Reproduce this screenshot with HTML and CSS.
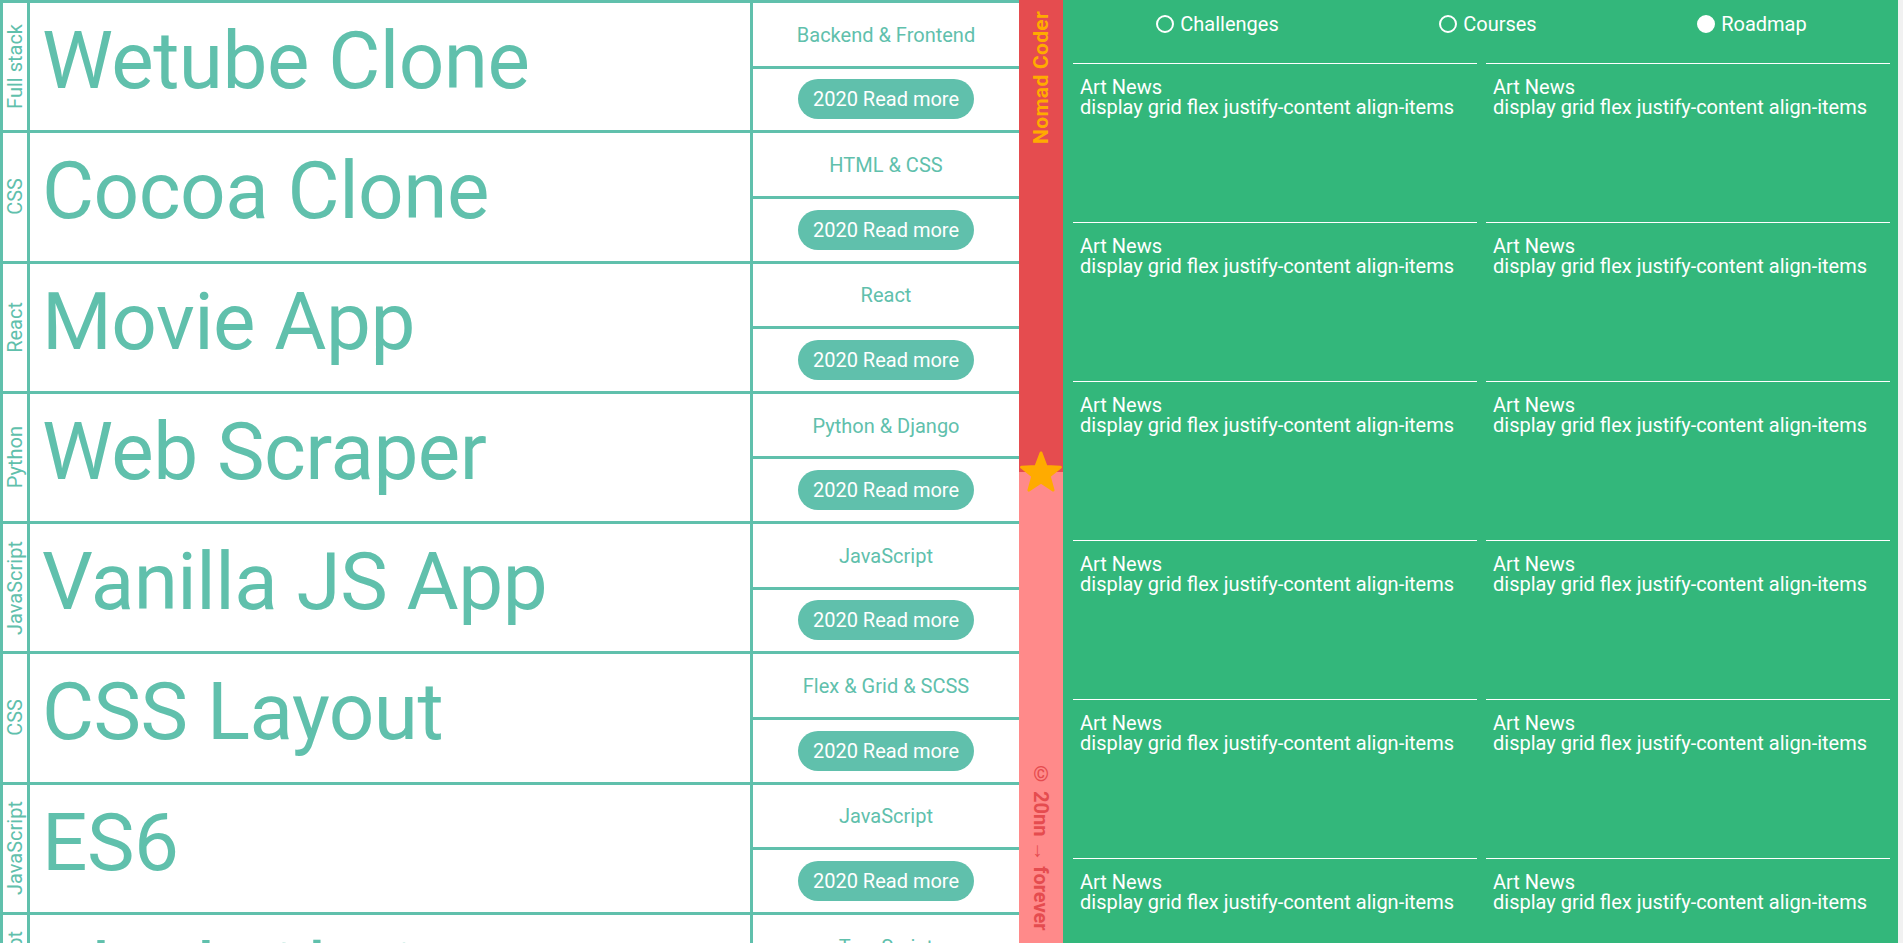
FILE: index.html
```html
<!DOCTYPE html>
<html lang="en">
<head>
<meta charset="utf-8">
<title>Nomad Coder</title>
<link rel="stylesheet" href="styles.css">
</head>
<body>
<div class="page">
  <section class="courses">
    <div class="course">
      <div class="course__tag"><span>Full stack</span></div>
      <div class="course__title">Wetube Clone</div>
      <div class="course__side">
        <div class="course__stack">Backend &amp; Frontend</div>
        <div class="course__more"><button class="btn">2020 Read more</button></div>
      </div>
    </div>
    <div class="course">
      <div class="course__tag"><span>CSS</span></div>
      <div class="course__title">Cocoa Clone</div>
      <div class="course__side">
        <div class="course__stack">HTML &amp; CSS</div>
        <div class="course__more"><button class="btn">2020 Read more</button></div>
      </div>
    </div>
    <div class="course">
      <div class="course__tag"><span>React</span></div>
      <div class="course__title">Movie App</div>
      <div class="course__side">
        <div class="course__stack">React</div>
        <div class="course__more"><button class="btn">2020 Read more</button></div>
      </div>
    </div>
    <div class="course">
      <div class="course__tag"><span>Python</span></div>
      <div class="course__title">Web Scraper</div>
      <div class="course__side">
        <div class="course__stack">Python &amp; Django</div>
        <div class="course__more"><button class="btn">2020 Read more</button></div>
      </div>
    </div>
    <div class="course">
      <div class="course__tag"><span>JavaScript</span></div>
      <div class="course__title">Vanilla JS App</div>
      <div class="course__side">
        <div class="course__stack">JavaScript</div>
        <div class="course__more"><button class="btn">2020 Read more</button></div>
      </div>
    </div>
    <div class="course">
      <div class="course__tag"><span>CSS</span></div>
      <div class="course__title">CSS Layout</div>
      <div class="course__side">
        <div class="course__stack">Flex &amp; Grid &amp; SCSS</div>
        <div class="course__more"><button class="btn">2020 Read more</button></div>
      </div>
    </div>
    <div class="course">
      <div class="course__tag"><span>JavaScript</span></div>
      <div class="course__title">ES6</div>
      <div class="course__side">
        <div class="course__stack">JavaScript</div>
        <div class="course__more"><button class="btn">2020 Read more</button></div>
      </div>
    </div>
    <div class="course">
      <div class="course__tag"><span>TypeScript</span></div>
      <div class="course__title">Block Chain</div>
      <div class="course__side">
        <div class="course__stack">TypeScript</div>
        <div class="course__more"><button class="btn">2020 Read more</button></div>
      </div>
    </div>
  </section>

  <aside class="ribbon">
    <div class="ribbon__top"><span class="ribbon__brand">Nomad Coder</span></div>
    <div class="ribbon__bottom"><span class="ribbon__copy">© 20nn → forever</span></div>
    <svg class="ribbon__star" viewBox="0 0 44 44" aria-hidden="true">
      <polygon points="22,2 27.06,15.54 41.5,16.17 30.18,25.16 34.05,39.08 22,31.1 9.95,39.08 13.82,25.16 2.5,16.17 16.94,15.54" fill="#ffab00" stroke="#ffab00" stroke-width="3" stroke-linejoin="round"/>
    </svg>
  </aside>

  <main class="board">
    <nav class="board__nav">
      <label class="nav-item"><span class="radio"></span>Challenges</label>
      <label class="nav-item"><span class="radio"></span>Courses</label>
      <label class="nav-item"><span class="radio radio--on"></span>Roadmap</label>
    </nav>
    <div class="news">
      <article class="news__card"><div>Art News</div><div>display grid flex justify-content align-items</div></article>
      <article class="news__card"><div>Art News</div><div>display grid flex justify-content align-items</div></article>
      <article class="news__card"><div>Art News</div><div>display grid flex justify-content align-items</div></article>
      <article class="news__card"><div>Art News</div><div>display grid flex justify-content align-items</div></article>
      <article class="news__card"><div>Art News</div><div>display grid flex justify-content align-items</div></article>
      <article class="news__card"><div>Art News</div><div>display grid flex justify-content align-items</div></article>
      <article class="news__card"><div>Art News</div><div>display grid flex justify-content align-items</div></article>
      <article class="news__card"><div>Art News</div><div>display grid flex justify-content align-items</div></article>
      <article class="news__card"><div>Art News</div><div>display grid flex justify-content align-items</div></article>
      <article class="news__card"><div>Art News</div><div>display grid flex justify-content align-items</div></article>
      <article class="news__card"><div>Art News</div><div>display grid flex justify-content align-items</div></article>
      <article class="news__card"><div>Art News</div><div>display grid flex justify-content align-items</div></article>
    </div>
  </main>
</div>
</body>
</html>
```

FILE: styles.css
```css
* {
  box-sizing: border-box;
  margin: 0;
  padding: 0;
}

html,
body {
  height: 100%;
}

body {
  background: #f1f1f1;
  font-family: Roboto, "Liberation Sans", sans-serif;
  overflow: hidden;
}

.page {
  display: flex;
  height: 100vh;
}

/* ---------- course table ---------- */
.courses {
  flex: none;
  width: 1019px;
  height: 100%;
  overflow: hidden;
  background: #fff;
  border-left: 3px solid #60c0ac;
}

.course {
  display: flex;
  height: 130.25px;
  border-top: 3px solid #60c0ac;
}

.course__tag {
  flex: none;
  width: 27px;
  border-right: 3px solid #60c0ac;
  display: flex;
  align-items: center;
  justify-content: center;
}

.course__tag span {
  writing-mode: vertical-rl;
  transform: rotate(180deg);
  font-size: 20px;
  color: #60c0ac;
  white-space: nowrap;
}

.course__title {
  flex: none;
  width: 723px;
  border-right: 3px solid #60c0ac;
  padding: 11px 0 0 12px;
  font-size: 80px;
  letter-spacing: -0.5px;
  color: #60c0ac;
  white-space: nowrap;
  overflow: hidden;
}

.course__side {
  flex: 1;
  display: flex;
  flex-direction: column;
}

.course__stack {
  flex: 1;
  display: flex;
  align-items: center;
  justify-content: center;
  padding-top: 1px;
  border-bottom: 3px solid #60c0ac;
  font-size: 20px;
  color: #60c0ac;
}

.course__more {
  flex: 1;
  display: flex;
  align-items: center;
  justify-content: center;
}

.btn {
  height: 40px;
  padding: 0 15px;
  border: none;
  border-radius: 20px;
  background: #60c0ac;
  color: #fff;
  font-family: inherit;
  font-size: 20px;
}

/* ---------- ribbon ---------- */
.ribbon {
  flex: none;
  width: 44px;
  height: 100%;
  position: relative;
  display: flex;
  flex-direction: column;
}

.ribbon__top {
  height: 50%;
  background: #e54c4f;
  display: flex;
  justify-content: center;
  align-items: flex-start;
  padding-top: 11px;
}

.ribbon__bottom {
  height: 50%;
  background: #ff8a8a;
  display: flex;
  justify-content: center;
  align-items: flex-end;
  padding-bottom: 12px;
}

.ribbon__brand {
  writing-mode: vertical-rl;
  transform: rotate(180deg);
  font-size: 21px;
  letter-spacing: 0.3px;
  font-weight: 700;
  color: #ffab00;
  white-space: nowrap;
}

.ribbon__copy {
  writing-mode: vertical-rl;
  font-size: 20px;
  font-weight: 700;
  color: #e54c4f;
  white-space: nowrap;
}

.ribbon__star {
  position: absolute;
  left: 0;
  top: calc(50% - 21px);
  width: 44px;
  height: 44px;
}

/* ---------- board ---------- */
.board {
  flex: none;
  width: 835px;
  height: 100%;
  overflow: hidden;
  background: #33b77b;
  color: #fff;
  padding: 0 8px 0 10px;
}

.board__nav {
  height: 48px;
  margin-bottom: 15px;
  padding: 0 3px;
  display: flex;
  justify-content: space-around;
  align-items: center;
  font-size: 20px;
}

.nav-item {
  display: flex;
  align-items: center;
  gap: 6px;
}

.radio {
  width: 18px;
  height: 18px;
  border: 2px solid #fff;
  border-radius: 50%;
}

.radio--on {
  background: #fff;
}

.news {
  display: grid;
  grid-template-columns: 1fr 1fr;
  column-gap: 9px;
}

.news__card {
  height: 159px;
  border-top: 1px solid #fff;
  padding: 13px 7px;
  font-size: 20px;
  line-height: 20px;
  white-space: nowrap;
}
```
